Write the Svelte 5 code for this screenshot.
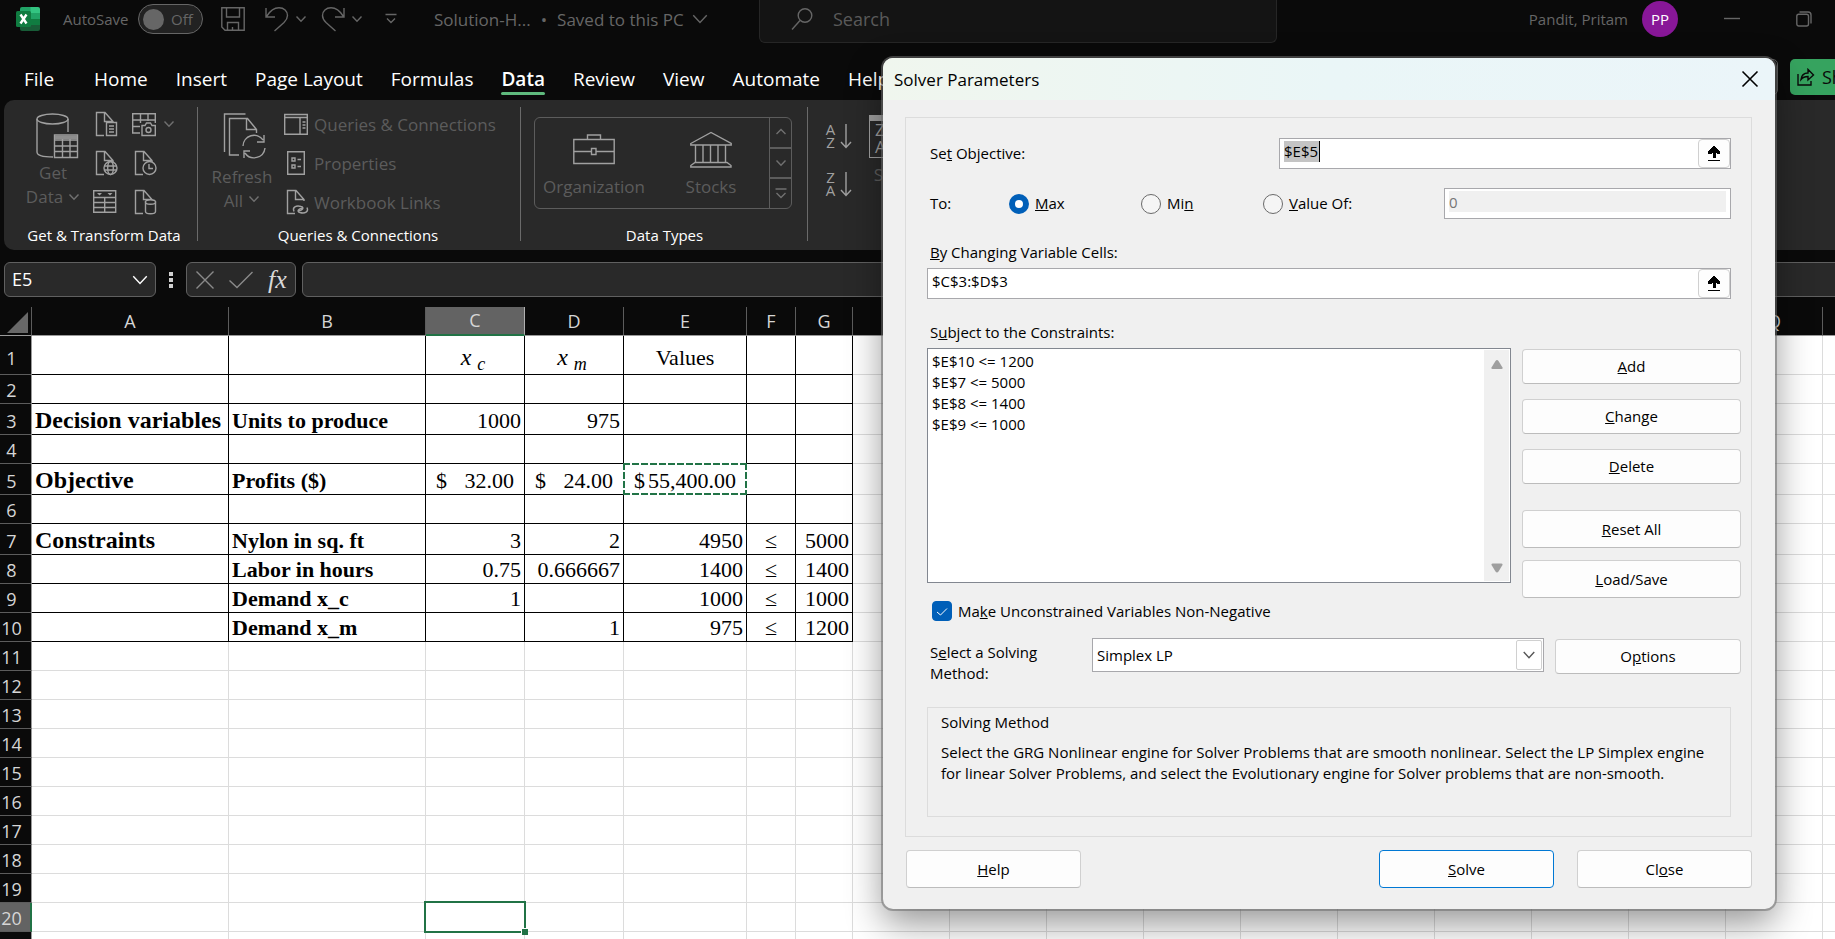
<script>
  const tabs = ['File', 'Home', 'Insert', 'Page Layout', 'Formulas', 'Data', 'Review', 'View', 'Automate', 'Help'];

  const columns = [
    ['A', 197], ['B', 197], ['C', 99], ['D', 99], ['E', 123], ['F', 49], ['G', 57],
    ['H', 97], ['I', 97], ['J', 97], ['K', 97], ['L', 97], ['M', 97], ['N', 97],
    ['O', 97], ['P', 97], ['Q', 97], ['R', 97]
  ];
  const rows = Array.from({ length: 21 }, (_, i) => i + 1);
  const rowClass = (r) => (r === 1 ? 'head' : r === 3 || r === 5 || r === 7 ? 'tall' : '');

  const cells = {
    C1: { sub: 'c' }, D1: { sub: 'm' }, E1: { v: 'Values', k: 'mid' },
    A3: { v: 'Decision variables', k: 'title' }, B3: { v: 'Units to produce', k: 'name' },
    C3: { v: '1000' }, D3: { v: '975' },
    A5: { v: 'Objective', k: 'title' }, B5: { v: 'Profits ($)', k: 'name' },
    C5: { money: '32.00' }, D5: { money: '24.00' }, E5: { money: '55,400.00', copied: true },
    A7: { v: 'Constraints', k: 'title' }, B7: { v: 'Nylon in sq. ft', k: 'name' },
    C7: { v: '3' }, D7: { v: '2' }, E7: { v: '4950' }, F7: { v: '≤', k: 'mid' }, G7: { v: '5000' },
    B8: { v: 'Labor in hours', k: 'name' },
    C8: { v: '0.75' }, D8: { v: '0.666667' }, E8: { v: '1400' }, F8: { v: '≤', k: 'mid' }, G8: { v: '1400' },
    B9: { v: 'Demand x_c', k: 'name' },
    C9: { v: '1' }, E9: { v: '1000' }, F9: { v: '≤', k: 'mid' }, G9: { v: '1000' },
    B10: { v: 'Demand x_m', k: 'name' },
    D10: { v: '1' }, E10: { v: '975' }, F10: { v: '≤', k: 'mid' }, G10: { v: '1200' }
  };

  let objective = $state('$E$5');
  let variables = $state('$C$3:$D$3');
  let goal = $state('max');
  let nonNegative = $state(true);
  const constraints = ['$E$10 <= 1200', '$E$7 <= 5000', '$E$8 <= 1400', '$E$9 <= 1000'];
</script>

{#snippet chevron(size)}
  <svg class="chev" width={size} height={size} viewBox="0 0 12 12" aria-hidden="true"><path d="M1.5 3.500 6 8.300l4.500-4.800" /></svg>
{/snippet}

{#snippet page()}
  <path d="M9 23.500H1.500V.500H10L18 9.500V11M9.500 .500V9.500H18" />
{/snippet}

{#snippet key(before, letter, after)}<span>{before}<u>{letter}</u>{after}</span>{/snippet}

{#snippet pickArrow()}
  <svg width="14" height="16" viewBox="0 0 14 16" aria-hidden="true"><path d="M6 0h2v1h1v1h1v1h1v1h1v1h1v3h-3V7H9v5H6V7H5v1H1V5h1V4h1V3h1V2h1V1h1V0zM1 14h12v1H1z" fill="#000" /></svg>
{/snippet}

<div class="app">
  <header class="titlebar">
    <div class="quick">
      <svg class="logo" width="24" height="24" viewBox="0 0 24 24" aria-hidden="true">
        <path d="M6 0h9v6H4V2q0-2 2-2z" fill="#21a366" /><path d="M14.500 0H22q2 0 2 2v4h-9.500z" fill="#33c481" />
        <path d="M4 6h11v6H4z" fill="#107c41" /><path d="M14.500 6H24v6h-9.500z" fill="#21a366" />
        <path d="M4 12h11v6H4z" fill="#185c37" /><path d="M14.500 12H24v6h-9.500z" fill="#107c41" />
        <path d="M4 18h20v4q0 2-2 2H6q-2 0-2-2z" fill="#185c37" />
        <rect y="4" width="15" height="16" rx="1.500" fill="#107c41" />
        <path d="M4.500 7.500 10.500 16.500M10.500 7.500 4.500 16.500" stroke="#fff" stroke-width="2.400" fill="none" />
      </svg>
      <span class="auto" id="autosave">AutoSave</span>
      <button class="switch" role="switch" aria-checked="false" aria-labelledby="autosave"><i></i>Off</button>
      <button class="ico save" aria-label="Save"><svg width="24" height="24" viewBox="0 0 24 24"><path d="M.8.8h22.400v22.400H4L.8 20zM5.500 1v9h13V1M6.500 23v-7.500h11V23M11.500 23v-3" /></svg></button>
      <button class="ico undo" aria-label="Undo"><svg width="24" height="24" viewBox="0 0 24 24"><path d="M1 1v9h9M1.500 9.500C5 4 9 .8 14 .8c5 0 8.500 3.500 8.500 7.700 0 3-1.500 5-3.500 7L9.500 24" /></svg></button>
      {@render chevron(12)}
      <button class="ico redo" aria-label="Redo"><svg width="24" height="24" viewBox="0 0 24 24"><path d="M23 1v9h-9M22.500 9.500C19 4 15 .8 10 .8 5 .8 1.500 4.300 1.500 8.500c0 3 1.500 5 3.500 7L14.500 24" /></svg></button>
      {@render chevron(12)}
      <button class="ico more" aria-label="Customize toolbar"><svg width="12" height="12" viewBox="0 0 12 12"><path d="M.5 1.500h11M2 5.500 6 9.500l4-4" /></svg></button>
      <button class="doc"><span>Solution-H...</span><span>•</span><span>Saved to this PC</span>{@render chevron(18)}</button>
    </div>
    <label class="search">
      <svg width="22" height="24" viewBox="0 0 22 24" aria-hidden="true"><circle cx="14" cy="8.500" r="6.800" /><path d="M9 13.500 1 22.500" /></svg>
      <input type="text" placeholder="Search" aria-label="Search" />
    </label>
    <div class="account">
      <span>Pandit, Pritam</span>
      <b class="avatar">PP</b>
      <button class="ico" aria-label="Minimize"><svg width="16" height="16" viewBox="0 0 16 16"><path d="M0 7.500h16" /></svg></button>
      <button class="ico" aria-label="Restore"><svg width="16" height="16" viewBox="0 0 16 16"><rect x=".8" y="3.300" width="11.700" height="11.700" rx="2" /><path d="M3.500 1H12q3 0 3 3v8.500" /></svg></button>
    </div>
  </header>

  <nav class="tabs">
    {#each tabs as t}
      <button class="tab" class:on={t === 'Data'}>{t}</button>
    {/each}
    <div class="share-row">
      <button class="comments" aria-label="Comments"></button>
      <button class="share">
        <svg width="18" height="18" viewBox="0 0 18 18" aria-hidden="true"><path d="M1 6v11h13v-4M4 11.500C4.500 7.500 7 5 11 5V1.500l5.500 5.500L11 12V8.500C8 8.500 6 9 4 11.500z" /></svg>
        Share
      </button>
    </div>
  </nav>

  <section class="ribbon">
    <div class="group g1">
      <div class="body">
        <button class="big">
          <svg width="52" height="46" viewBox="0 0 52 46" aria-hidden="true">
            <path d="M10 6v33c0 3 6 5 16 5M41 6v13" /><ellipse cx="25.500" cy="6" rx="15.500" ry="5" />
            <path d="M27.500 22h23v22.500h-23zM27.500 27h23M27.500 33h23M27.500 38.500h23M35.500 26v18M43 26v18" /><path d="M28 22.500h22v3.500H28z" fill="#8d8d8d" stroke="none" />
          </svg>
          <span>Get</span><span class="line">Data {@render chevron(12)}</span>
        </button>
        <div class="minis">
          <button class="ico" aria-label="From text"><svg viewBox="0 0 24 24">{@render page()}<path class="hole" d="M11.500 10.500h10v13h-10zM14 14h5M14 17h5M14 20h5" /></svg></button>
          <button class="ico" aria-label="From picture"><svg viewBox="0 0 24 24"><path d="M8 21H.7V1.700h22.600V11M8.500 1.700V11M16 1.700V9M.7 8h22.600M.7 14.500H8" /><path class="hole" d="M10 13.500h3l1.500-2.500h4l1.500 2.500h3.300v10H10z" /><circle cx="16.500" cy="18" r="2.500" /></svg></button>
          {@render chevron(12)}
          <button class="ico" aria-label="From web"><svg viewBox="0 0 24 24">{@render page()}<circle class="hole" cx="15.500" cy="17" r="6.500" /><path d="M9 15h13M9 19h13" /><ellipse cx="15.500" cy="17" rx="2.800" ry="6.500" /></svg></button>
          <button class="ico" aria-label="Recent sources"><svg viewBox="0 0 24 24"><g transform="translate(2 0)">{@render page()}<circle class="hole" cx="15.500" cy="17" r="6.500" /><path d="M15 13v4.500h4" /></g></svg></button>
          <i></i>
          <button class="ico" aria-label="From table"><svg viewBox="0 0 24 24"><g transform="translate(-2 0)"><path d="M.7.700h22v21.600H.7zM.7 7.500h22M.7 12.500h22M.7 17.500h22M11.700 7.500v15" /><path d="M4 3h5L6.500 5.500zM14.500 3h5L17 5.500z" fill="#a0a0a0" stroke="none" /></g></svg></button>
          <button class="ico" aria-label="Existing connections"><svg viewBox="0 0 24 24"><g transform="translate(2 0)">{@render page()}<path class="hole" d="M11.500 12v9.500c0 3 10 3 10 0V12z" /><ellipse class="hole" cx="16.500" cy="12" rx="5" ry="2.200" /></g></svg></button>
        </div>
      </div>
      <h2>Get &amp; Transform Data</h2>
    </div>

    <div class="group g2">
      <div class="body">
        <button class="big refresh">
          <svg width="52" height="46" viewBox="0 0 52 46" aria-hidden="true">
            <path d="M8.500 39V1h21M23 42H13.500V5.500h18l9 11V20M30.500 5.500V16.500H40" />
            <path d="M27 33a11 11 0 0 1 20-6M49 35a11 11 0 0 1-20 5M48 22v7h-7M28 45v-7h6" />
          </svg>
          <span>Refresh</span><span class="line">All {@render chevron(12)}</span>
        </button>
        <div class="links">
          <button><svg width="24" height="24" viewBox="0 0 24 24"><path d="M.7 2.500h22.600v19.800H.7zM.7 5.500h22.600M16 5.500v17M18.500 10h3M18.500 13h3M18.500 16h3" /></svg>Queries &amp; Connections</button>
          <button><svg width="24" height="24" viewBox="0 0 24 24"><path d="M3.700.7h16.600v22.600H3.700zM8 7h3v3H8zM8 14h3v3H8zM13.500 8.500H17M13.500 15.500H17" /></svg>Properties</button>
          <button><svg width="24" height="24" viewBox="0 0 24 24"><g transform="translate(2 0)">{@render page()}<path class="hole" d="M8 21.500c-2-4 2-6.500 7-5 4 1 1 4.500-2.500 4M21 17.500c2 4-2 6.500-7 5-4-1-1-4.500 2.500-4" /></g></svg>Workbook Links</button>
        </div>
      </div>
      <h2>Queries &amp; Connections</h2>
    </div>

    <div class="group g3">
      <div class="body">
        <div class="gallery">
          <button><svg width="42" height="38" viewBox="0 0 42 38"><path d="M.8 8.500h40.400v24H.8zM14.500 8v-4h13v4M.8 20.500H18M23.500 20.500h17.700M18.500 17.500h4.500v6h-4.500z" /></svg>Organization</button>
          <button><svg width="42" height="38" viewBox="0 0 42 38"><path d="M.8 12.500 21 1.500l20.200 11v1.500H.8zM5.500 14v17M13 14v17M20.500 14v17M28 14v17M35.500 14v17M5 31.500h32l4 3v1.500H.8v-1.500z" /></svg>Stocks</button>
          <div class="steps">
            <button aria-label="Previous row"><svg width="12" height="12" viewBox="0 0 12 12"><path d="M1.500 8 6 3.500 10.500 8" /></svg></button>
            <button aria-label="Next row">{@render chevron(12)}</button>
            <button aria-label="All data types"><svg width="12" height="12" viewBox="0 0 12 12"><path d="M.5 1h11M1.500 5 6 9.500 10.500 5" /></svg></button>
          </div>
        </div>
      </div>
      <h2>Data Types</h2>
    </div>

    <div class="group g4">
      <div class="sorts">
        <button><span>A<br />Z</span><svg width="12" height="25" viewBox="0 0 12 25"><path d="M6 0v23M1 18l5 5.500 5-5.500" /></svg></button>
        <button><span>Z<br />A</span><svg width="12" height="25" viewBox="0 0 12 25"><path d="M6 0v23M1 18l5 5.500 5-5.500" /></svg></button>
      </div>
      <button class="sort"><span class="sortbox">ZA<br />AZ</span>Sort</button>
    </div>
  </section>

  <div class="formula">
    <label class="namebox"><input type="text" value="E5" aria-label="Name box" />{@render chevron(18)}</label>
    <svg class="dots" width="4" height="16" viewBox="0 0 4 16" aria-hidden="true"><path d="M0 0h4v4H0zM0 6h4v4H0zM0 12h4v4H0z" fill="#d0d0d0" /></svg>
    <div class="fx">
      <button aria-label="Cancel"><svg width="18" height="18" viewBox="0 0 18 18"><path d="M.5.500l17 17M17.500.500l-17 17" /></svg></button>
      <button aria-label="Enter"><svg width="24" height="18" viewBox="0 0 24 18"><path d="M.5 9.500 8 16.500 23.500 1" /></svg></button>
      <button class="fn">fx</button>
    </div>
    <input class="bar" type="text" aria-label="Formula bar" />
  </div>

  <div class="sheet">
    <table>
      <colgroup>
        <col class="gutter" />
        {#each columns as [, w]}<col style="width:{w}px" />{/each}
      </colgroup>
      <thead>
        <tr>
          <th class="corner"><svg width="21" height="21" viewBox="0 0 21 21" aria-hidden="true"><path d="M21 0v21H0z" fill="#686868" /></svg></th>
          {#each columns as [c]}<th class:sel={c === 'C'} scope="col">{c}</th>{/each}
        </tr>
      </thead>
      <tbody>
        {#each rows as r}
          <tr class={rowClass(r)}>
            <th scope="row" class:sel={r === 20}>{r}</th>
            {#each columns as [c], i}
              {@const cell = cells[c + r]}
              <td class={[cell?.k, { boxed: r <= 10 && i < 7 }]}>
                {#if cell?.sub}
                  <span class="var">x<small>{cell.sub}</small></span>
                {:else if cell?.money}
                  <span class="money"><span>$</span><span>{cell.money}</span></span>
                {:else if cell}{cell.v}{/if}
                {#if cell?.copied}<i class="ants"></i>{/if}
                {#if c === 'C' && r === 20}<i class="cursor"></i>{/if}
              </td>
            {/each}
          </tr>
        {/each}
      </tbody>
    </table>
  </div>

  <div class="dialog" role="dialog" aria-labelledby="dlg">
    <div class="caption">
      <span id="dlg">Solver Parameters</span>
      <button aria-label="Close dialog"><svg width="16" height="16" viewBox="0 0 16 16"><path d="M.5.500l15 15M15.500.500l-15 15" /></svg></button>
    </div>
    <div class="frame">
      <div class="row objective">
        <label for="obj">{@render key('Se', 't', ' Objective:')}</label>
        <div class="field"><input id="obj" class="marked" type="text" bind:value={objective} /><button aria-label="Pick objective cell">{@render pickArrow()}</button></div>
      </div>
      <div class="row goals">
        <span class="lbl">To:</span>
        <label><input type="radio" name="goal" value="max" bind:group={goal} />{@render key('', 'M', 'ax')}</label>
        <label><input type="radio" name="goal" value="min" bind:group={goal} />{@render key('Mi', 'n', '')}</label>
        <label><input type="radio" name="goal" value="value" bind:group={goal} />{@render key('', 'V', 'alue Of:')}</label>
        <input class="target" type="text" value="0" disabled aria-label="Target value" />
      </div>
      <label class="over" for="vars">{@render key('', 'B', 'y Changing Variable Cells:')}</label>
      <div class="field wide"><input id="vars" type="text" bind:value={variables} /><button aria-label="Pick variable cells">{@render pickArrow()}</button></div>
      <label class="over" for="cons">{@render key('S', 'u', 'bject to the Constraints:')}</label>
      <div class="cols">
        <div class="left">
          <div class="list">
            <select id="cons" size="10">
              {#each constraints as c}<option>{c}</option>{/each}
            </select>
            <div class="scroll">
              <svg width="12" height="10" viewBox="0 0 12 10"><path d="M6 0q.8 0 1.500 1l4 6.500Q12 9 10.500 9h-9Q0 9 .5 7.500l4-6.500Q5.200 0 6 0z" fill="#9f9f9f" /></svg>
              <svg width="12" height="10" viewBox="0 0 12 10"><path d="M6 9.500q.8 0 1.500-1l4-6.500Q12 .5 10.500.500h-9Q0 .5.500 2l4 6.500q.7 1 1.500 1z" fill="#9f9f9f" /></svg>
            </div>
          </div>
          <label class="check">
            <input type="checkbox" bind:checked={nonNegative} />
            <svg width="20" height="20" viewBox="0 0 20 20" aria-hidden="true"><path d="M5 11l3.500 3L15 7.500" /></svg>
            {@render key('Ma', 'k', 'e Unconstrained Variables Non-Negative')}
          </label>
        </div>
        <div class="actions">
          <button>{@render key('', 'A', 'dd')}</button>
          <button>{@render key('', 'C', 'hange')}</button>
          <button>{@render key('', 'D', 'elete')}</button>
          <button class="lg first">{@render key('', 'R', 'eset All')}</button>
          <button class="lg">{@render key('', 'L', 'oad/Save')}</button>
        </div>
      </div>
      <div class="method">
        <label for="method">{@render key('S', 'e', 'lect a Solving Method:')}</label>
        <div class="combo">
          <select id="method"><option>Simplex LP</option><option>GRG Nonlinear</option><option>Evolutionary</option></select>
          <i>{@render chevron(14)}</i>
        </div>
        <button>{@render key('O', 'p', 'tions')}</button>
      </div>
      <div class="about">
        <h3>Solving Method</h3>
        <p>Select the GRG Nonlinear engine for Solver Problems that are smooth nonlinear. Select the LP Simplex engine for linear Solver Problems, and select the Evolutionary engine for Solver problems that are non-smooth.</p>
      </div>
    </div>
    <div class="foot">
      <button>{@render key('', 'H', 'elp')}</button>
      <button class="primary">{@render key('', 'S', 'olve')}</button>
      <button>{@render key('Cl', 'o', 'se')}</button>
    </div>
  </div>
</div>

<style>
  :global(body) { margin: 0; background: #0a0a0a; }
  * { box-sizing: border-box; }
  .app {
    position: relative; display: flex; flex-direction: column; height: 100vh; overflow: hidden;
    background: #0a0a0a; color: #fff; font: 15px/21px 'Open Sans', 'Noto Sans', sans-serif;
  }
  button, input, select { font: inherit; color: inherit; }
  button { padding: 0; border: 0; background: none; white-space: nowrap; }
  svg { display: block; flex: none; overflow: visible; }
  svg path, svg circle, svg ellipse, svg rect { vector-effect: non-scaling-stroke; }
  .titlebar svg, .tabs svg, .ribbon svg, .formula svg, .caption svg, .combo svg { fill: none; stroke: currentColor; stroke-width: 1.4; }
  .titlebar .logo, .formula .dots { stroke: none; }

  .titlebar { display: flex; height: 44px; color: #666; }
  .quick, .account { display: flex; align-items: center; height: 38px; }
  .quick { flex: 0 0 759px; padding-left: 16px; }
  .auto { margin-left: 23px; width: 66px; }
  .switch {
    display: flex; align-items: center; gap: 7px; width: 65px; height: 30px; margin-left: 9px; padding-left: 4px;
    border: 1px solid #666; border-radius: 15px; background: #222;
  }
  .switch i { width: 21px; height: 21px; border-radius: 50%; background: #666; }
  .save { margin-left: 18px; }
  .undo { margin: 0 6px 0 20px; }
  .redo { margin: 0 6px 0 14px; }
  .more { margin-left: 22px; }
  .doc { display: flex; align-items: center; gap: 10px; margin-left: 37px; font-size: 17px; }
  .doc .chev { margin-left: -3px; }
  .search {
    display: flex; align-items: flex-start; gap: 20px; flex: 0 1 518px; height: 43px; padding: 7px 0 0 31px;
    background: #141414; border: 1px solid #262626; border-top: 0; border-radius: 0 0 6px 6px;
  }
  .search input { flex: 1; min-width: 0; padding: 0; border: 0; background: none; font-size: 18px; line-height: 24px; }
  .search input::placeholder { color: #5a5a5a; opacity: 1; }
  .account { margin-left: auto; padding-right: 23px; }
  .avatar {
    display: grid; place-items: center; width: 36px; height: 36px; margin: 0 46px 0 14px;
    border-radius: 50%; background: #881798; color: #fff; font-weight: 400;
  }
  .account .ico + .ico { margin-left: 56px; }

  .tabs { display: flex; gap: 28px; height: 56px; padding: 15px 0 0 24px; font-size: 19px; }
  .tab { position: relative; height: 40px; }
  .tab:first-child { margin-right: 12px; }
  .tab.on { font-weight: 600; }
  .tab.on::after { content: ''; position: absolute; inset: auto 0 4px; height: 3px; border-radius: 2px; background: #5fba7d; }
  .share-row { display: flex; gap: 12px; margin: 0 -24px 0 auto; }
  .comments { width: 36px; height: 36px; border: 1px solid #5a5a5a; border-radius: 5px; }
  .share { display: flex; align-items: center; gap: 7px; width: 69px; height: 36px; padding-left: 7px; border-radius: 5px; background: #36a35f; color: #0a0a0a; overflow: hidden; font-size: 18px; }

  .ribbon { display: flex; height: 150px; margin-left: 4px; border-radius: 10px 0 0 10px; background: #292929; color: #5c5c5c; font-size: 17px; }
  .ribbon svg { color: #a0a0a0; }
  .ribbon .chev { color: #707070; }
  .ribbon .hole { fill: #292929; }
  .group { position: relative; display: flex; flex-direction: column; padding-top: 12px; flex: none; }
  .group:not(.g4)::after { content: ''; position: absolute; inset: 7px 0 9px auto; width: 1px; background: #6a6a6a; }
  .group h2 { margin: 0 0 5px; text-align: center; color: #fff; font-size: 15px; font-weight: 400; line-height: 20px; white-space: nowrap; }
  .body { display: flex; flex: 1; min-height: 0; }
  .g1 { width: 194px; padding-right: 14px; }
  .g2 { width: 323px; padding-right: 3px; }
  .g3 { width: 287px; }
  .g1 h2 { margin-left: 20px; }
  .big { display: flex; flex-direction: column; align-items: center; width: 52px; margin-left: 23px; line-height: 24px; }
  .big svg:first-child { margin: 1px 0 2px; }
  .big .line { display: flex; align-items: center; gap: 5px; }
  .refresh { width: 58px; margin-left: 15px; }
  .refresh svg:first-child { margin-bottom: 6px; }
  .minis { display: grid; grid-template: repeat(3, 39px) / 37px 31px 12px; align-items: start; margin-left: 16px; }
  .minis .ico { width: 24px; height: 24px; }
  .minis .chev { margin-top: 6px; }
  .links { display: grid; grid-auto-rows: 39px; align-items: start; margin-left: 13px; }
  .links button { display: flex; align-items: center; gap: 6px; height: 24px; }
  .gallery { display: flex; width: 258px; height: 92px; margin: 5px 0 0 13px; border: 1px solid #5c5c5c; border-radius: 6px; }
  .gallery > button { display: flex; flex-direction: column; align-items: center; gap: 7px; width: 118px; padding-top: 13px; }
  .gallery > button:nth-child(2) { width: 116px; }
  .steps { display: grid; flex: 1; border-left: 1px solid #5c5c5c; }
  .steps button { display: grid; place-items: center; }
  .steps button + button { border-top: 2px solid #5c5c5c; }
  .steps svg { color: #707070; }
  .g4 { flex: 1; flex-direction: row; padding-left: 17px; }
  .sorts { display: grid; grid-auto-rows: 48px; width: 44px; padding-top: 11px; align-items: start; }
  .sorts button { display: flex; align-items: center; gap: 4px; color: #a0a0a0; font-size: 15px; line-height: 13px; }
  .sorts span { width: 11px; }
  .sort { width: 42px; line-height: 24px; height: 76px; }
  .sortbox { display: block; height: 43px; margin: 1px 0 5px; padding-left: 5px; border: 1px solid #a0a0a0; border-top-width: 6px; color: #a0a0a0; line-height: 17px; text-align: left; }

  .formula { display: flex; align-items: center; height: 35px; margin: 12px 0 10px 4px; }
  .namebox, .fx, .bar { height: 35px; border: 1px solid #606060; border-radius: 6px; background: #292929; }
  .namebox { display: flex; align-items: center; width: 152px; padding: 0 6px 0 7px; }
  .namebox input { flex: 1; min-width: 0; padding: 0; border: 0; background: none; font-size: 18px; }
  .dots { margin: 0 13px; }
  .fx { display: flex; align-items: center; gap: 15px; width: 110px; margin-right: 6px; padding-left: 9px; color: #8a8a8a; }
  .fx .fn { color: #d8d8d8; font: italic 26px/30px 'Liberation Serif', serif; }
  .bar { flex: 1; margin-right: -8px; }

  .sheet { flex: 1; min-height: 0; overflow: hidden; background: #fff; color: #000; }
  table { width: max-content; table-layout: fixed; border-collapse: separate; border-spacing: 0; }
  .gutter { width: 32px; }
  th { padding: 0; background: #0a0a0a; color: #d6d6d6; font-size: 18px; font-weight: 400; line-height: 25px; }
  thead th { height: 29px; border-right: 1px solid #5c5c5c; border-bottom: 1px solid #9a9a9a; }
  thead th.sel { background: #636363; border-right-color: #b0b0b0; border-bottom: 2px solid #217346; }
  .corner svg { margin: 2px 0 0 7px; }
  tbody th { padding-right: 8px; border-right: 1px solid #9a9a9a; border-bottom: 1px solid #5c5c5c; vertical-align: bottom; }
  tbody th.sel { padding-right: 7px; background: #636363; border-right: 2px solid #217346; }
  tbody tr { height: 29px; }
  tbody tr.tall { height: 31px; }
  tbody tr.head { height: 39px; }
  td {
    position: relative; padding: 0 3px; border-right: 1px solid #dcdcdc; border-bottom: 1px solid #dcdcdc;
    text-align: right; vertical-align: bottom; white-space: nowrap; font: 22px/27px 'Liberation Serif', 'Times New Roman', serif;
  }
  tr.head td, tr.head th { padding-bottom: 3px; }
  td.boxed { border-color: #000; }
  td.title, td.name { text-align: left; font-weight: 700; }
  td.title { font-size: 24px; }
  td.mid { text-align: center; }
  .var { display: flex; justify-content: center; align-items: baseline; gap: 6px; height: 27px; padding-right: 4px; font-size: 24px; font-style: italic; }
  .var small { position: relative; top: 5px; font-size: 18px; }
  .money { display: flex; justify-content: space-between; padding: 0 7px; }
  .ants {
    position: absolute; inset: -1px;
    background:
      repeating-linear-gradient(90deg, #217346 0 7px, #fff 7px 9px) 0 0 / 100% 2px no-repeat,
      repeating-linear-gradient(90deg, #217346 0 7px, #fff 7px 9px) 0 100% / 100% 2px no-repeat,
      repeating-linear-gradient(#217346 0 7px, #fff 7px 9px) 0 0 / 2px 100% no-repeat,
      repeating-linear-gradient(#217346 0 7px, #fff 7px 9px) 100% 0 / 2px 100% no-repeat;
  }
  .cursor { position: absolute; z-index: 1; inset: -2px; border: 2px solid #217346; }
  .cursor::after { content: ''; position: absolute; right: -4px; bottom: -4px; width: 6px; height: 6px; border: 1px solid #fff; border-width: 1px 0 0 1px; background: #217346; box-sizing: content-box; }

  .dialog {
    position: absolute; z-index: 2; top: 58px; right: 60px; width: 892px; border-radius: 10px; background: #f0f0f0; color: #000;
    box-shadow: 0 0 0 2px rgba(110, 110, 110, .55), 0 14px 36px rgba(0, 0, 0, .42);
  }
  .caption {
    display: flex; align-items: center; justify-content: space-between; height: 42px; padding: 0 17px 0 11px;
    border-radius: 10px 10px 0 0; background: linear-gradient(90deg, #f0f6ee, #eaf6f7 50%, #ebf5f9); font-size: 17px;
  }
  .caption svg { stroke-width: 1.6; }
  .frame { margin: 17px 23px 0 22px; padding: 20px 10px 19px 21px; border: 1px solid #dcdcdc; }
  .row { display: grid; align-items: center; margin-right: 10px; height: 31px; }
  .objective { grid-template-columns: 352px 1fr; }
  .row > label:first-child, .lbl, .over, .method > label { padding-left: 3px; }
  .field { display: flex; height: 31px; border: 1px solid #a8a8ac; background: #fff; }
  .field.wide { margin-right: 10px; }
  .field input { flex: 1; min-width: 0; padding: 2px 4px 6px; border: 0; background: none; line-height: 21px; outline: 0; }
  .field .marked {
    background: linear-gradient(#000, #000) 39px 2px / 1px 21px no-repeat, linear-gradient(#c4c4c4, #c4c4c4) 4px 2px / 35px 21px no-repeat;
  }
  .field button { display: grid; place-items: center; width: 32px; border: 1px solid #d0d0d0; border-radius: 4px; background: #fdfdfd; }
  .goals { grid-template-columns: 82px 132px 122px 1fr 287px; margin-top: 19px; }
  .goals label { display: flex; align-items: center; gap: 6px; }
  .goals input[type='radio'] { appearance: none; width: 20px; height: 20px; margin: 0; border: 1px solid #6a6a6a; border-radius: 50%; background: #f5f5f5; }
  .goals input[type='radio']:checked { border: 6px solid #005fb8; background: #fff; }
  .target { height: 31px; padding: 2px 4px 6px; border: 1px solid #a8a8ac; background: linear-gradient(#f0f0f0, #f0f0f0) content-box, #fff; color: #767676; }
  .over { display: block; margin: 23px 0 5px; }
  .cols { display: grid; grid-template-columns: 1fr 219px; gap: 11px; }
  .list { display: flex; height: 235px; padding: 1px; border: 1px solid #828790; background: #fff; }
  .list select { flex: 1; min-width: 0; padding: 1px 3px; border: 0; background: #fff; outline: 0; overflow: hidden; }
  .list option { height: 21px; min-height: 21px; padding: 0; line-height: 21px; }
  .scroll { display: flex; flex-direction: column; justify-content: space-between; align-items: center; width: 25px; padding: 10px 0 8px; background: #f0f0f0; }
  .check { display: flex; align-items: center; position: relative; height: 20px; margin: 18px 0 0 5px; }
  .check input { appearance: none; width: 20px; height: 20px; margin: 0 6px 0 0; border: 1px solid #005fb8; border-radius: 4px; }
  .check input:checked { background: #005fb8; }
  .check svg { position: absolute; left: 0; fill: none; stroke: #fff; pointer-events: none; }
  .actions { display: flex; flex-direction: column; gap: 15px; padding-top: 1px; }
  .actions .lg { height: 38px; }
  .actions .first { margin: 11px 0 -3px; }
  .actions button, .method button, .foot button {
    height: 35px; border: 1px solid #d0d0d0; border-bottom-color: #bcbcbc; border-radius: 4px; background: #fdfdfd;
  }
  .method { display: grid; grid-template-columns: 165px 1fr 186px; align-items: start; margin-top: 17px; height: 69px; }
  .method > label { width: 140px; padding-top: 4px; }
  .method button { margin-top: 1px; }
  .combo { position: relative; height: 34px; margin-right: 11px; }
  .combo select { appearance: none; width: 100%; height: 34px; padding: 0 4px; border: 1px solid #a8a8ac; border-radius: 0; background: #fff; }
  .combo i { position: absolute; top: 2px; right: 2px; display: grid; place-items: center; width: 26px; height: 30px; border: 1px solid #d0d0d0; border-radius: 2px; color: #555; pointer-events: none; }
  .about { height: 110px; margin-right: 10px; padding: 4px 13px; border: 1px solid #dcdcdc; }
  .about h3 { margin: 0 0 9px; font-size: 15px; font-weight: 400; line-height: 21px; }
  .about p { margin: 0; }
  .foot { display: flex; gap: 23px; padding: 13px 23px 21px; }
  .foot button { width: 175px; height: 38px; }
  .foot .primary { margin-left: auto; border-color: #0078d4; }
</style>
